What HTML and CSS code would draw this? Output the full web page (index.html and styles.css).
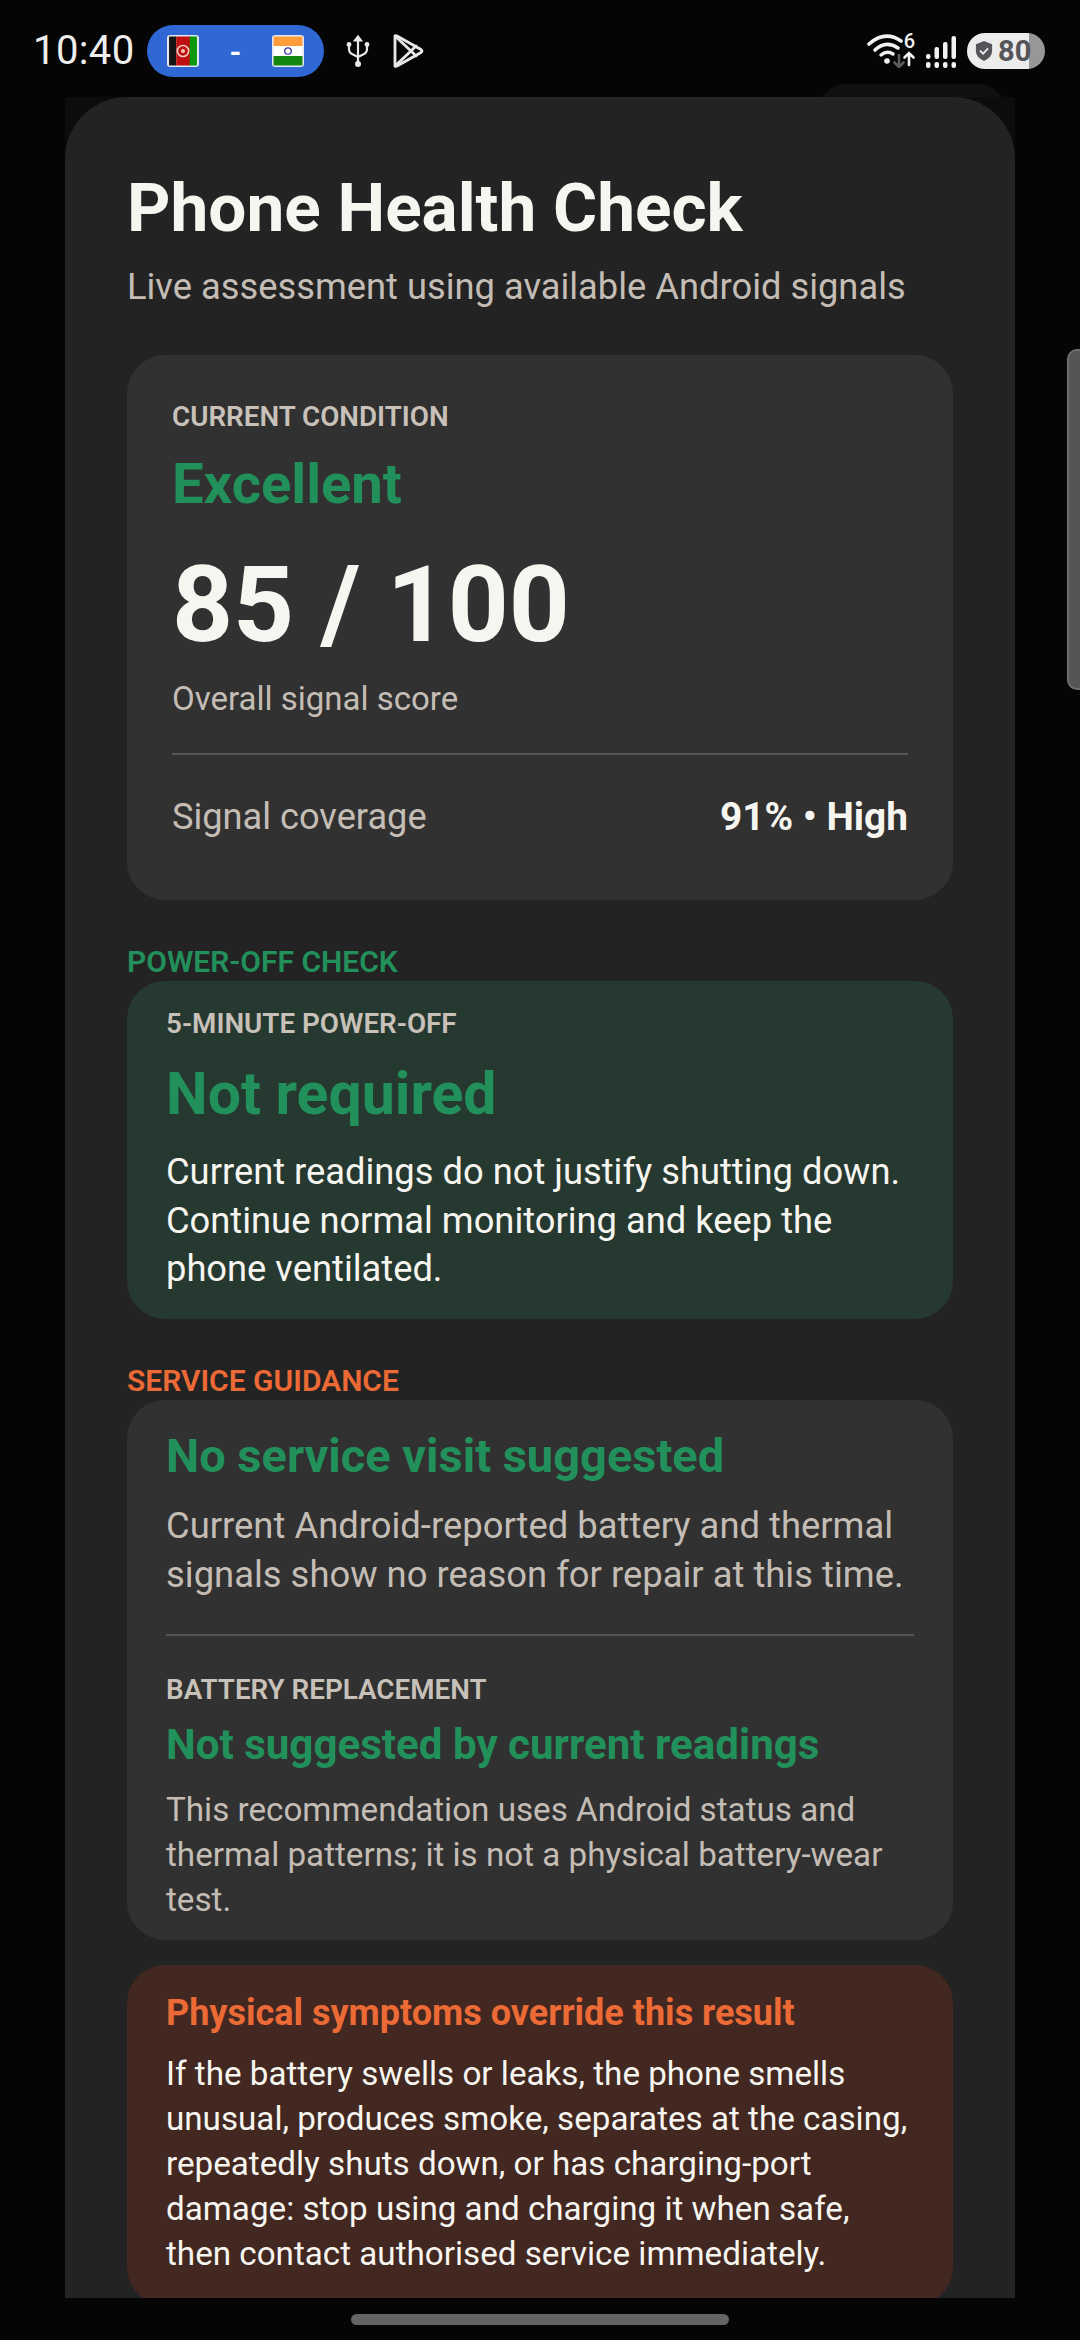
FILE: index.html
```html
<!DOCTYPE html>
<html lang="en">
<head>
  <meta charset="UTF-8">
  <title>Phone Health Check</title>
  <link rel="stylesheet" href="styles.css">
</head>
<body>
  <!-- Status bar -->
  <div class="statusbar">
    <div class="status-left">
      <span class="clock">10:40</span>
      <div class="score-pill">
        <svg class="flag" viewBox="0 0 31 32" preserveAspectRatio="none">
          <rect width="31" height="32" rx="3" fill="#e4e8f0"/>
          <rect x="2" y="1.5" width="7" height="29" fill="#141414"/>
          <rect x="9" y="1.5" width="14" height="29" fill="#bf0f10"/>
          <rect x="22" y="1.5" width="7" height="29" fill="#0a9a0c"/>
          <circle cx="15.5" cy="16" r="5.5" fill="none" stroke="#f0c9c0" stroke-width="1.6"/>
          <circle cx="15.5" cy="16" r="2" fill="#f0c9c0"/>
        </svg>
        <span class="dash">-</span>
        <svg class="flag" viewBox="0 0 31 32" preserveAspectRatio="none">
          <rect width="31" height="32" rx="3" fill="#e4e8f0"/>
          <rect x="1.5" y="1.5" width="28" height="9.5" fill="#ff9d3c"/>
          <rect x="1.5" y="11" width="28" height="10" fill="#fff"/>
          <rect x="1.5" y="21" width="28" height="9.5" fill="#14870f"/>
          <circle cx="15.5" cy="16" r="3.2" fill="none" stroke="#3a3a94" stroke-width="1.3"/>
        </svg>
      </div>
      <!-- usb -->
      <svg class="icon-usb" viewBox="0 0 24 34" fill="none" stroke="#e8e8e8" stroke-width="2.2" stroke-linecap="round">
        <path d="M12 4V30"/>
        <path d="M9 6.5L12 2.5L15 6.5Z" fill="#e8e8e8"/>
        <path d="M3 12V15Q3 19 7 20.5L12 23"/>
        <path d="M21 12V15Q21 19 17 20.5L12 23"/>
        <circle cx="3" cy="10.5" r="2.4" fill="#e8e8e8" stroke="none"/>
        <circle cx="21" cy="10.5" r="2.4" fill="#e8e8e8" stroke="none"/>
        <circle cx="12" cy="30" r="3" fill="#e8e8e8" stroke="none"/>
      </svg>
      <!-- play store -->
      <svg class="icon-play" viewBox="0 0 32 36" fill="none" stroke="#e8e8e8" stroke-width="2.8" stroke-linejoin="round" stroke-linecap="round">
        <path d="M3 4Q3 2 5 3L29 16.5Q31 18 29 19.5L5 33Q3 34 3 32Z"/>
        <path d="M3 3L19 18L3 33"/>
        <path d="M19 18L24 13M19 18L24 23"/>
      </svg>
    </div>
    <div class="status-right">
      <!-- wifi with traffic arrows -->
      <div class="wifi">
        <svg class="icon-wifi" viewBox="0 0 48 34" fill="none" stroke-linecap="round">
          <path d="M2 10Q18 -4 34 7" stroke="#f2f2f2" stroke-width="3.6"/>
          <path d="M8 16Q19 6 31 14" stroke="#f2f2f2" stroke-width="3.6"/>
          <path d="M14 21Q20 16 26 20" stroke="#f2f2f2" stroke-width="3.4"/>
          <circle cx="20" cy="27" r="2.800" fill="#f2f2f2"/>
          <path d="M32 21V33M27.500 28.500L32 33L36.500 28.500" stroke="#5c5c5c" stroke-width="2.600"/>
          <path d="M42 31V19M37.500 23.500L42 19L46.500 23.500" stroke="#f2f2f2" stroke-width="2.600"/>
        </svg>
        <span class="wifi-gen">6</span>
      </div>
      <!-- cell signal -->
      <svg class="icon-signal" viewBox="0 0 30 32" fill="#f2f2f2">
        <rect x="0" y="26" width="4.500" height="6" rx="2"/>
        <rect x="8.500" y="26" width="4.500" height="6" rx="2"/>
        <rect x="17" y="26" width="4.500" height="6" rx="2"/>
        <rect x="25.500" y="26" width="4.500" height="6" rx="2"/>
        <rect x="0" y="18" width="4.500" height="5" rx="2"/>
        <rect x="8.500" y="11" width="4.500" height="12" rx="2"/>
        <rect x="17" y="6" width="4.500" height="17" rx="2"/>
        <rect x="25.500" y="0" width="4.500" height="23" rx="2"/>
      </svg>
      <div class="battery">
        <svg class="icon-shield" viewBox="0 0 20 24">
          <path d="M10 1L19 4.500V12Q19 19 10 23Q1 19 1 12V4.500Z" fill="#55555a"/>
          <path d="M5.500 11.500L9 15L14.500 9" fill="none" stroke="#ececec" stroke-width="2"/>
        </svg>
        <span class="battery-level">80</span>
      </div>
    </div>
  </div>

  <!-- App screen -->
  <div class="peek"></div>
  <div class="screen">
    <main class="sheet">
      <h1>Phone Health Check</h1>
      <p class="subtitle">Live assessment using available Android signals</p>

      <section class="card condition">
        <div class="eyebrow">CURRENT CONDITION</div>
        <div class="status-word">Excellent</div>
        <div class="score">85 / 100</div>
        <div class="score-note">Overall signal score</div>
        <div class="coverage">
          <span>Signal coverage</span>
          <strong>91% • High</strong>
        </div>
      </section>

      <h2 class="section-label green">POWER-OFF CHECK</h2>
      <section class="card power">
        <div class="eyebrow">5-MINUTE POWER-OFF</div>
        <div class="verdict">Not required</div>
        <p class="body-text">Current readings do not justify shutting down. Continue normal monitoring and keep the phone ventilated.</p>
      </section>

      <h2 class="section-label orange">SERVICE GUIDANCE</h2>
      <section class="card service">
        <div class="service-title">No service visit suggested</div>
        <p class="service-text">Current Android-reported battery and thermal signals show no reason for repair at this time.</p>
        <hr class="divider">
        <div class="eyebrow">BATTERY REPLACEMENT</div>
        <div class="battery-title">Not suggested by current readings</div>
        <p class="battery-text">This recommendation uses Android status and thermal patterns; it is not a physical battery-wear test.</p>
      </section>

      <section class="card warning">
        <div class="warning-title">Physical symptoms override this result</div>
        <p class="warning-text">If the battery swells or leaks, the phone smells unusual, produces smoke, separates at the casing, repeatedly shuts down, or has charging-port damage: stop using and charging it when safe, then contact authorised service immediately.</p>
      </section>
    </main>
  </div>

  <div class="navbar"><div class="nav-handle"></div></div>
  <div class="edge-handle"></div>
</body>
</html>
```

FILE: styles.css
```css
* {
  box-sizing: border-box;
}

html, body {
  margin: 0;
  height: 2340px;
  overflow: hidden;
}

body {
  position: relative;
  background: #050505;
  font-family: Roboto, "Liberation Sans", sans-serif;
  color: #f7f5f0;
}

/* status bar */
.statusbar {
  height: 97px;
  display: flex;
  justify-content: space-between;
  padding: 25px 35px 0 33px;
}

.status-left, .status-right {
  display: flex;
  align-items: flex-start;
}

.clock {
  width: 114px;
  font-size: 40px;
  line-height: 52px;
  color: #eeeeee;
  letter-spacing: 0.4px;
}

.score-pill {
  width: 177px;
  height: 52px;
  background: #2f67d4;
  border-radius: 26px;
  display: flex;
  align-items: center;
  justify-content: space-between;
  padding: 0 20px;
}

.flag {
  width: 32px;
  height: 32px;
}

.dash {
  font-size: 30px;
  font-weight: 700;
  color: #fff;
}

.icon-usb {
  width: 24px;
  height: 34px;
  margin: 9px 0 0 22px;
}

.icon-play {
  width: 32px;
  height: 36px;
  margin: 8px 0 0 22px;
}

.status-right {
  gap: 11px;
}

.wifi {
  position: relative;
  width: 48px;
  height: 34px;
  margin-top: 9px;
}

.icon-wifi {
  width: 48px;
  height: 34px;
}

.wifi-gen {
  position: absolute;
  top: -1px;
  right: 0;
  font-size: 20px;
  line-height: 16px;
  font-weight: 500;
  color: #f2f2f2;
}

.icon-signal {
  width: 30px;
  height: 32px;
  margin-top: 11px;
}

.battery {
  width: 78px;
  height: 36px;
  margin-top: 8px;
  border-radius: 18px;
  display: flex;
  align-items: center;
  gap: 5px;
  padding-left: 8px;
  background: linear-gradient(to right, #ececec 62px, #979797 62px);
}

.icon-shield {
  width: 18px;
  height: 22px;
  flex: none;
}

.battery-level {
  font-size: 29px;
  font-weight: 700;
  color: #55555a;
}

/* app screen */
.peek {
  position: absolute;
  top: 84px;
  left: 817px;
  width: 190px;
  height: 40px;
  background: #111;
  border-radius: 30px 30px 0 0;
}

.screen {
  position: relative;
  width: 950px;
  height: 2201px;
  margin-left: 65px;
  background: #0c0c0c;
  overflow: hidden;
}

.sheet {
  background: #232323;
  border-radius: 62px 62px 0 0;
  height: 2300px;
  padding: 71px 62px 0;
}

h1 {
  margin: 0;
  font-size: 67.5px;
  line-height: 80px;
  font-weight: 700;
  color: #f7f5f0;
}

.subtitle {
  margin: 17px 0 0;
  font-size: 36.3px;
  line-height: 44px;
  color: #c4bdb5;
}

.card {
  width: 826px;
  border-radius: 38px;
  background: #313131;
}

.condition {
  height: 545px;
  margin-top: 46px;
  padding: 44px 45px 0;
}

.eyebrow {
  font-size: 27.8px;
  line-height: 36px;
  font-weight: 600;
  color: #c8c1b9;
}

.status-word {
  margin-top: 16px;
  font-size: 56.2px;
  line-height: 66px;
  font-weight: 700;
  color: #22905a;
}

.score {
  margin-top: 28px;
  font-size: 106.5px;
  line-height: 120px;
  font-weight: 700;
}

.score-note {
  margin-top: 13px;
  font-size: 33px;
  line-height: 42px;
  color: #c4bdb5;
}

.coverage {
  display: flex;
  justify-content: space-between;
  align-items: center;
  margin-top: 33px;
  padding-top: 40px;
  border-top: 2px solid #57544f;
  font-size: 36.2px;
  line-height: 44px;
  color: #c4bdb5;
}

.coverage strong {
  font-size: 38.8px;
  font-weight: 700;
  color: #f7f5f0;
}

.section-label {
  margin: 0;
  font-size: 30px;
  line-height: 36px;
  font-weight: 600;
}

.section-label.green {
  margin-top: 44px;
  color: #22905a;
}

.section-label.orange {
  margin-top: 44px;
  color: #ec6a35;
}

.power {
  height: 338px;
  margin-top: 1px;
  padding: 25px 39px 0;
  background: #263931;
}

.verdict {
  margin-top: 17px;
  font-size: 59px;
  line-height: 70px;
  font-weight: 700;
  color: #22905a;
}

.body-text {
  margin: 19px 0 0;
  font-size: 36.3px;
  line-height: 48.5px;
  color: #f7f5f0;
}

.service {
  height: 540px;
  margin-top: 1px;
  padding: 27px 39px 0;
}

.service-title {
  font-size: 47px;
  line-height: 58px;
  font-weight: 700;
  color: #22905a;
}

.service-text {
  margin: 16px 0 0;
  font-size: 36.4px;
  line-height: 49px;
  color: #c4bdb5;
}

.divider {
  margin: 35px 0 36px;
  border: 0;
  border-top: 2px solid #57544f;
}

.battery-title {
  margin-top: 11px;
  font-size: 42.1px;
  line-height: 52px;
  font-weight: 700;
  color: #22905a;
}

.battery-text {
  margin: 16px 0 0;
  font-size: 33.2px;
  line-height: 45px;
  color: #c4bdb5;
}

.warning {
  height: 340px;
  margin-top: 25px;
  padding: 23px 39px 0;
  background: #422821;
}

.warning-title {
  font-size: 36px;
  line-height: 50px;
  font-weight: 700;
  color: #ec6a35;
}

.warning-text {
  margin: 13px 0 0;
  font-size: 33.2px;
  line-height: 45px;
  color: #f7f5f0;
}

/* gesture bar */
.navbar {
  height: 42px;
  display: flex;
  justify-content: center;
  padding-top: 16px;
}

.nav-handle {
  width: 378px;
  height: 11px;
  border-radius: 6px;
  background: #646464;
}

.edge-handle {
  position: absolute;
  top: 349px;
  right: 0;
  width: 13px;
  height: 341px;
  background: #555;
  border: 2px solid #6e6e6e;
  border-right: 0;
  border-radius: 10px 0 0 10px;
}
```
